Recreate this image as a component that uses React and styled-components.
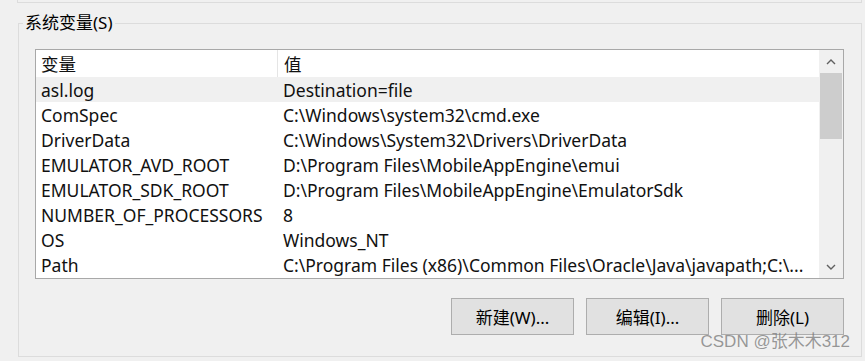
import React from "react";
import styled, { createGlobalStyle } from "styled-components";

const Global = createGlobalStyle`
  html, body { margin: 0; padding: 0; background: #f0f0f0; }
  body { font-family: "Noto Sans", "Noto Sans CJK SC", sans-serif; color: #000; }
  * { box-sizing: border-box; }
`;

const Page = styled.div`
  position: relative;
  width: 865px;
  height: 361px;
  overflow: hidden;
  background: #f0f0f0;
`;

const PrevGroup = styled.div`
  margin-left: 17px;
  width: 845px;
  height: 3px;
  border: 1px solid #dcdcdc;
  border-top: none;
`;

const Group = styled.section`
  position: relative;
  margin: 20px 0 0 18px;
  width: 844px;
  height: 334px;
  border: 1px solid #dcdcdc;
  padding: 25px 17px 0 16px;
  display: flex;
  flex-direction: column;
`;

const GroupTitle = styled.span`
  position: absolute;
  left: 4px;
  top: -13px;
  padding: 0 2px;
  background: #f0f0f0;
  font-size: 17px;
  line-height: 24px;
`;

const ListBox = styled.div`
  display: flex;
  width: 809px;
  height: 230px;
  border: 1px solid #a8a8a8;
  background: #fff;
`;

const Table = styled.div`
  flex: 1;
  display: flex;
  flex-direction: column;
  overflow: hidden;
`;

const Row = styled.div`
  display: grid;
  grid-template-columns: 241px 1fr;
  height: ${(p) => (p.$header ? 27 : 25)}px;
  align-items: center;
  background: ${(p) => (p.$selected ? "#f0f0f0" : "#fff")};
  font-size: 17.5px;
  white-space: nowrap;
  flex-shrink: 0;
`;

const Cell = styled.div`
  height: 100%;
  display: flex;
  align-items: center;
  padding-left: ${(p) => (p.$second ? 6 : 5)}px;
  border-left: ${(p) => (p.$divider ? "1px solid #e5e5e5" : "none")};
  overflow: hidden;
  color: #111;
`;

const ScrollBar = styled.div`
  width: 24px;
  background: #f0f0f0;
  display: flex;
  flex-direction: column;
`;

const Arrow = styled.div`
  height: 23px;
  display: flex;
  align-items: center;
  justify-content: center;
`;

const Thumb = styled.div`
  height: 66px;
  margin: 0 1px;
  background: #cdcdcd;
`;

const Track = styled.div`
  flex: 1;
`;

const Buttons = styled.div`
  display: flex;
  justify-content: flex-end;
  gap: 12px;
  width: 809px;
  margin-top: 19px;
`;

const Button = styled.button`
  width: 123px;
  height: 37px;
  background: #e1e1e1;
  border: 1px solid #adadad;
  font-family: inherit;
  font-size: 17px;
  color: #000;
  padding: 0;
`;

const Watermark = styled.div`
  position: absolute;
  right: 15px;
  top: 330px;
  font-size: 17px;
  line-height: 24px;
  color: rgba(120, 120, 120, 0.75);
  font-family: "Liberation Sans", "Noto Sans CJK SC", sans-serif;
  white-space: nowrap;
`;

const rows = [
  ["asl.log", "Destination=file"],
  ["ComSpec", "C:\\Windows\\system32\\cmd.exe"],
  ["DriverData", "C:\\Windows\\System32\\Drivers\\DriverData"],
  ["EMULATOR_AVD_ROOT", "D:\\Program Files\\MobileAppEngine\\emui"],
  ["EMULATOR_SDK_ROOT", "D:\\Program Files\\MobileAppEngine\\EmulatorSdk"],
  ["NUMBER_OF_PROCESSORS", "8"],
  ["OS", "Windows_NT"],
  ["Path", "C:\\Program Files (x86)\\Common Files\\Oracle\\Java\\javapath;C:\\..."],
];

const Chevron = ({ up }) => (
  <svg width="10" height="6" viewBox="0 0 10 6">
    <polyline
      points={up ? "1,5 5,1 9,5" : "1,1 5,5 9,1"}
      fill="none"
      stroke="#606060"
      strokeWidth="1.4"
    />
  </svg>
);

export default function App() {
  return (
    <Page>
      <Global />
      <PrevGroup />
      <Group>
        <GroupTitle>系统变量(S)</GroupTitle>
        <ListBox>
          <Table>
            <Row $header>
              <Cell>变量</Cell>
              <Cell $second $divider>值</Cell>
            </Row>
            {rows.map(([k, v], i) => (
              <Row key={k} $selected={i === 0}>
                <Cell>{k}</Cell>
                <Cell $second>{v}</Cell>
              </Row>
            ))}
          </Table>
          <ScrollBar>
            <Arrow><Chevron up /></Arrow>
            <Thumb />
            <Track />
            <Arrow><Chevron /></Arrow>
          </ScrollBar>
        </ListBox>
        <Buttons>
          <Button>新建(W)...</Button>
          <Button>编辑(I)...</Button>
          <Button>删除(L)</Button>
        </Buttons>
      </Group>
      <Watermark>CSDN @张木木312</Watermark>
    </Page>
  );
}
